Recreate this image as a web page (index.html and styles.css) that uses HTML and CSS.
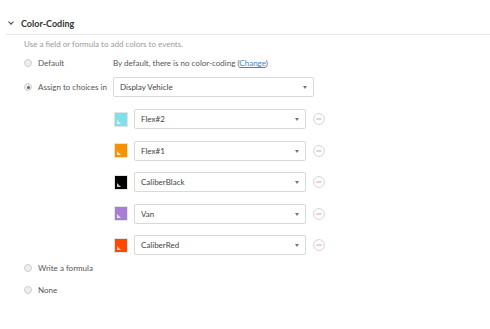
FILE: index.html
```html
<!DOCTYPE html>
<html lang="en">
<head>
    <meta charset="UTF-8">
    <title>Color-Coding</title>
    <link rel="stylesheet" href="styles.css">
</head>
<body>
    <div class="section">
        <div class="section-header">
            <span class="chevron"></span>
            <h2>Color-Coding</h2>
        </div>
        <p class="section-desc">Use a field or formula to add colors to events.</p>

        <div class="options">
            <div class="option option-default">
                <label class="option-label"><span class="radio"></span>Default</label>
                <div class="option-body">By default, there is no color-coding (<a href="#">Change</a>)</div>
            </div>

            <div class="option">
                <label class="option-label"><span class="radio checked"></span>Assign to choices in</label>
                <div class="option-body">
                    <div class="dropdown dropdown-wide">Display Vehicle</div>
                </div>
            </div>

            <div class="choices">
                <div class="choice">
                    <span class="swatch" style="background: #80dfe9;"></span>
                    <div class="dropdown">Flex#2</div>
                    <svg class="remove" viewBox="0 0 12 12"><circle cx="6" cy="6" r="5.4"/><line x1="3.3" y1="6" x2="8.7" y2="6"/></svg>
                </div>
                <div class="choice">
                    <span class="swatch" style="background: #f59300;"></span>
                    <div class="dropdown">Flex#1</div>
                    <svg class="remove" viewBox="0 0 12 12"><circle cx="6" cy="6" r="5.4"/><line x1="3.3" y1="6" x2="8.7" y2="6"/></svg>
                </div>
                <div class="choice">
                    <span class="swatch" style="background: #000000;"></span>
                    <div class="dropdown">CaliberBlack</div>
                    <svg class="remove" viewBox="0 0 12 12"><circle cx="6" cy="6" r="5.4"/><line x1="3.3" y1="6" x2="8.7" y2="6"/></svg>
                </div>
                <div class="choice">
                    <span class="swatch" style="background: #a67ed3;"></span>
                    <div class="dropdown">Van</div>
                    <svg class="remove" viewBox="0 0 12 12"><circle cx="6" cy="6" r="5.4"/><line x1="3.3" y1="6" x2="8.7" y2="6"/></svg>
                </div>
                <div class="choice">
                    <span class="swatch" style="background: #ff4800;"></span>
                    <div class="dropdown">CaliberRed</div>
                    <svg class="remove" viewBox="0 0 12 12"><circle cx="6" cy="6" r="5.4"/><line x1="3.3" y1="6" x2="8.7" y2="6"/></svg>
                </div>
            </div>

            <div class="option option-formula">
                <label class="option-label"><span class="radio"></span>Write a formula</label>
            </div>
            <div class="option option-none">
                <label class="option-label"><span class="radio"></span>None</label>
            </div>
        </div>
    </div>
</body>
</html>
```

FILE: styles.css
```css
body {
    margin: 0;
    font-family: Lato, "Open Sans", sans-serif;
    font-size: 8px;
    color: #555;
    background: #fff;
}

.section {
    padding-top: 12px;
}

.section-header {
    display: flex;
    align-items: center;
    height: 22px;
    margin-left: 6px;
    padding-left: 3px;
    border-bottom: 1px solid #e6e6e6;
}

.chevron {
    width: 3px;
    height: 3px;
    border-right: 1.3px solid #444;
    border-bottom: 1.3px solid #444;
    transform: rotate(45deg);
    margin-top: -2px;
    margin-right: 8px;
}

.section-header h2 {
    margin: 0;
    font-size: 9px;
    font-weight: 700;
    color: #333;
}

.section-desc {
    margin: 3px 0 0 24px;
    line-height: 12px;
    font-size: 8px;
    color: #9a9a9a;
}

.options {
    margin-left: 24px;
    margin-top: 5px;
}

.option {
    display: flex;
    align-items: center;
    min-height: 16px;
    margin-bottom: 4px;
}

.option-default {
    margin-bottom: 6px;
}

.option-label {
    display: flex;
    align-items: center;
    width: 89px;
    flex-shrink: 0;
    color: #555;
}

.radio {
    width: 6px;
    height: 6px;
    border: 1px solid #cfcfcf;
    border-radius: 50%;
    background: #eee;
    margin-right: 6px;
    display: flex;
    align-items: center;
    justify-content: center;
}

.radio.checked::after {
    content: "";
    width: 3px;
    height: 3px;
    border-radius: 50%;
    background: #666;
}

.option-body {
    color: #555;
}

.option-body a {
    color: #3f7fd6;
}

.dropdown {
    position: relative;
    box-sizing: border-box;
    width: 172px;
    height: 20px;
    line-height: 18px;
    padding-left: 6px;
    border: 1px solid #d9d9d9;
    border-radius: 2px;
    color: #444;
    background: #fff;
}

.dropdown::after {
    content: "";
    position: absolute;
    right: 6px;
    top: 8px;
    border-left: 2.5px solid transparent;
    border-right: 2.5px solid transparent;
    border-top: 3px solid #777;
}

.dropdown-wide {
    width: 201px;
}

.choices {
    margin-left: 90px;
    padding-top: 8px;
    display: flex;
    flex-direction: column;
    gap: 11.5px;
}

.choice {
    display: flex;
    align-items: center;
}

.swatch {
    position: relative;
    box-sizing: border-box;
    width: 14px;
    height: 15px;
    border: 1px solid #e4e4e4;
    margin-right: 6px;
}

.swatch::after {
    content: "";
    position: absolute;
    left: 2px;
    bottom: 2px;
    border-left: 4px solid rgba(255, 255, 255, 0.75);
    border-top: 4px solid transparent;
}

.remove {
    width: 12px;
    height: 12px;
    margin-left: 7px;
}

.remove circle {
    fill: none;
    stroke: #d4d4d4;
    stroke-width: 1;
}

.remove line {
    stroke: #f09a9a;
    stroke-width: 1;
}

.option-formula {
    margin-top: 5px;
    margin-bottom: 6px;
}
```
